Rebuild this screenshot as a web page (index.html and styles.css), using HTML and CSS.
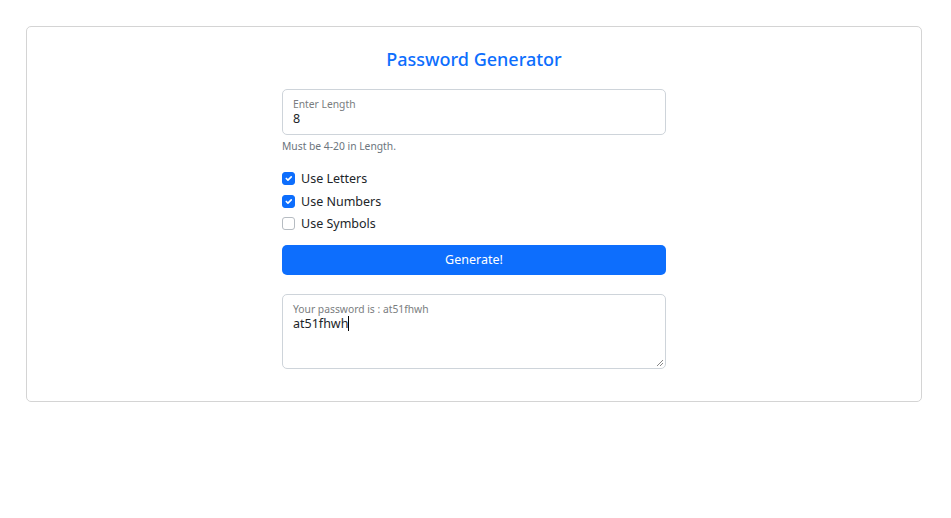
FILE: index.html
```html
<!DOCTYPE html>
<html>
<head>
<meta charset="utf-8">
<link rel="stylesheet" href="styles.css">
</head>
<body>
<div class="card">
  <h4 class="title">Password Generator</h4>
  <form class="form">
    <div class="floating">
      <input class="field" type="text" value="8">
      <label class="flabel">Enter Length</label>
    </div>
    <div class="help">Must be 4-20 in Length.</div>
    <div class="checks">
      <label class="check"><span class="box on"><svg viewBox="0 0 20 20" width="13" height="13"><path d="M6 10l3 3 6-6" fill="none" stroke="#fff" stroke-width="3" stroke-linecap="round" stroke-linejoin="round"/></svg></span>Use Letters</label>
      <label class="check"><span class="box on"><svg viewBox="0 0 20 20" width="13" height="13"><path d="M6 10l3 3 6-6" fill="none" stroke="#fff" stroke-width="3" stroke-linecap="round" stroke-linejoin="round"/></svg></span>Use Numbers</label>
      <label class="check"><span class="box"></span>Use Symbols</label>
    </div>
    <button class="btn" type="button">Generate!</button>
    <div class="floating area">
      <div class="field tarea"><span class="val">at51fhwh</span><span class="caret"></span></div>
      <label class="flabel">Your password is : at51fhwh</label>
      <svg class="grip" width="8" height="8" viewBox="0 0 8 8"><path d="M7 1L1 7M7 4L4 7" stroke="#888" stroke-width="1"/></svg>
    </div>
  </form>
</div>
</body>
</html>
```
FILE: styles.css
```css
* { box-sizing: border-box; }
html, body { margin: 0; padding: 0; background: #fff; }
body {
  font-family: "Noto Sans", "Open Sans", sans-serif;
  color: #212529;
  font-size: 12.5px;
}
.card {
  margin: 26px 29px 0 26px;
  height: 376px;
  border: 1px solid #d4d4d4;
  border-radius: 5px;
  display: flex;
  flex-direction: column;
  align-items: center;
  padding-top: 19px;
}
.title {
  margin: 0;
  font-size: 18px;
  font-weight: 500;
  color: #0d6efd;
  line-height: 26px;
}
.form {
  width: 384px;
  margin-top: 17px;
  display: flex;
  flex-direction: column;
}
.floating { position: relative; }
.field {
  display: block;
  width: 100%;
  height: 46px;
  border: 1px solid #ced4da;
  border-radius: 5px;
  padding: 19px 10px 6px 10px;
  font-family: inherit;
  font-size: 12.5px;
  color: #212529;
  outline: none;
  line-height: 18px;
}
.flabel {
  position: absolute;
  left: 11px;
  top: 8px;
  font-size: 10.3px;
  color: #7a7d80;
  line-height: 14px;
}
.help {
  margin-top: 4px;
  font-size: 10.3px;
  color: #6c757d;
  line-height: 14px;
}
.checks {
  margin-top: 16px;
  display: flex;
  flex-direction: column;
  gap: 3px;
}
.check {
  display: flex;
  align-items: center;
  gap: 6px;
  line-height: 19.5px;
  font-size: 12.5px;
}
.box {
  width: 13px;
  height: 13px;
  border: 1px solid #b6bcc2;
  border-radius: 3px;
  display: inline-flex;
  align-items: center;
  justify-content: center;
  background: #fff;
}
.box.on { background: #0d6efd; border-color: #0d6efd; }
.box svg { display: block; }
.btn {
  margin-top: 11px;
  height: 30px;
  border: none;
  border-radius: 5px;
  background: #0d6efd;
  color: #fff;
  font-family: inherit;
  font-size: 12.5px;
  padding: 0;
}
.area { margin-top: 19px; }
.tarea {
  height: 75px;
  padding-top: 20px;
}
.caret {
  display: inline-block;
  width: 1px;
  height: 15px;
  background: #000;
  vertical-align: -3px;
}
.grip { position: absolute; right: 2px; bottom: 2px; }
```
